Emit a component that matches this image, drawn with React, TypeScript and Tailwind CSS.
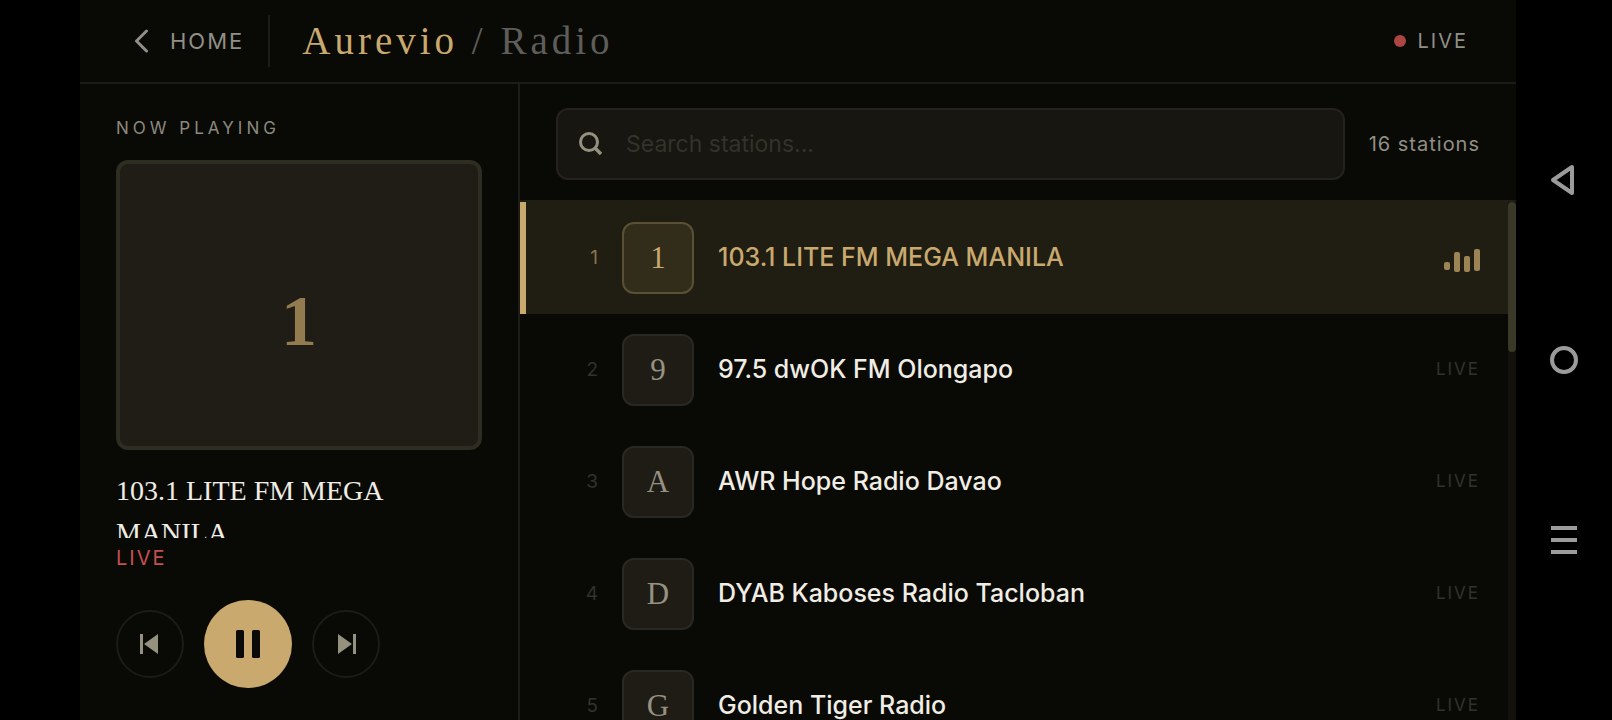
import React, { useState } from 'react';
import { clsx } from 'clsx';

interface Station {
  id: number;
  name: string;
}

const STATION_TOTAL = 16;

const stations: Station[] = [
  { id: 1, name: '103.1 LITE FM MEGA MANILA' },
  { id: 2, name: '97.5 dwOK FM Olongapo' },
  { id: 3, name: 'AWR Hope Radio Davao' },
  { id: 4, name: 'DYAB Kaboses Radio Tacloban' },
  { id: 5, name: 'Golden Tiger Radio' },
];

function Equalizer() {
  return (
    <svg viewBox="0 0 36 28" className="h-7 w-9 fill-[#9c8455]" aria-label="Playing">
      <rect x="0" y="18" width="6" height="8" rx="2" />
      <rect x="10" y="8" width="6" height="20" rx="2" />
      <rect x="20" y="12" width="6" height="16" rx="2" />
      <rect x="30" y="5" width="6" height="22" rx="2" />
    </svg>
  );
}

function Header() {
  return (
    <header className="flex h-[84px] shrink-0 items-center border-b-2 border-[#1c1c18] pr-12 pl-[54px]">
      <a href="#home" className="flex items-center gap-[22px] pr-6 text-[22px] tracking-[2px] text-[#918f86]">
        <svg viewBox="0 0 14 24" className="h-6 w-3.5" fill="none" stroke="currentColor" strokeWidth="3" strokeLinecap="round" strokeLinejoin="round">
          <path d="M12.5 2 2.5 12l10 10" />
        </svg>
        HOME
      </a>
      <span className="h-[52px] w-0.5 bg-[#1c1c18]" />
      <h1 className="pl-8 font-['Liberation_Serif',serif] text-[39px] tracking-[4px] whitespace-nowrap text-[#c9a96e]">
        Aurevio <span className="text-[#5e5d59]">/ Radio</span>
      </h1>
      <div className="ml-auto flex items-center gap-3 text-xl tracking-[2px] text-[#918f86]">
        <span className="size-3 rounded-full bg-[#ac4643]" />
        LIVE
      </div>
    </header>
  );
}

function NowPlaying({ station, onStep }: { station: Station; onStep: (step: number) => void }) {
  const [playing, setPlaying] = useState(true);

  return (
    <aside className="flex w-[440px] shrink-0 flex-col border-r-2 border-[#1c1c18] px-9 py-8">
      <h2 className="text-[17px] leading-6 tracking-[4px] text-[#8b897f]">NOW PLAYING</h2>

      {/* Cover */}
      <div className="mt-5 flex min-h-0 flex-1 items-center justify-center rounded-xl border-4 border-[#2e2d22] bg-[#201d16] pt-8">
        <span className="font-['Liberation_Serif',serif] text-7xl font-bold text-[#937b50]">{station.name[0]}</span>
      </div>

      <p className="mt-5 h-[68px] overflow-hidden font-['Liberation_Serif',serif] text-[28px] leading-[42px] text-[#f0ede4]">
        {station.name}
      </p>
      <p className="mt-1.5 text-xl leading-7 tracking-[2px] text-[#c4504f]">LIVE</p>

      {/* Controls */}
      <div className="mt-7 flex items-center gap-5">
        <button aria-label="Previous station" onClick={() => onStep(-1)} className="flex size-[68px] items-center justify-center rounded-full border-2 border-[#1b1b17]">
          <svg viewBox="0 0 24 24" className="size-6 fill-[#95917f]">
            <path d="M2 2h3v20H2zM20 2v20L6 12z" />
          </svg>
        </button>
        <button aria-label={playing ? 'Pause' : 'Play'} onClick={() => setPlaying(!playing)} className="flex size-[88px] items-center justify-center rounded-full bg-[#c9a96e]">
          <svg viewBox="0 0 28 28" className="size-7 fill-[#0a0a08]">
            {playing ? (
              <>
                <rect x="2" y="0" width="8" height="28" rx="1.5" />
                <rect x="18" y="0" width="8" height="28" rx="1.5" />
              </>
            ) : (
              <path d="M5 1v26l21-13z" />
            )}
          </svg>
        </button>
        <button aria-label="Next station" onClick={() => onStep(1)} className="flex size-[68px] items-center justify-center rounded-full border-2 border-[#1b1b17]">
          <svg viewBox="0 0 24 24" className="size-6 fill-[#95917f]">
            <path d="M19 2h3v20h-3zM4 2v20l14-10z" />
          </svg>
        </button>
      </div>
    </aside>
  );
}

function StationRow({ station, active, onSelect }: { station: Station; active: boolean; onSelect: () => void }) {
  return (
    <li>
      <button
        onClick={onSelect}
        className={clsx(
          'flex h-28 w-full items-center gap-6 border-l-[6px] pr-7 pl-9 text-left',
          active ? 'border-[#c9a96e] bg-[#201d13]' : 'border-transparent'
        )}
      >
        <span className={clsx('w-9 text-right text-[19px]', active ? 'text-[#8a7449]' : 'text-[#33322c]')}>
          {station.id}
        </span>
        <span
          className={clsx(
            "flex size-[72px] shrink-0 items-center justify-center rounded-xl border-2 font-['Liberation_Serif',serif] text-[31px]",
            active ? 'border-[#5a5033] bg-[#322d1b] text-[#c9a96e]' : 'border-[#2a2822] bg-[#1f1c16] text-[#979181]'
          )}
        >
          {station.name[0]}
        </span>
        <span className={clsx('min-w-0 flex-1 truncate text-[25px] font-medium', active ? 'text-[#c9a96e]' : 'text-[#f0ede4]')}>
          {station.name}
        </span>
        {active ? <Equalizer /> : <span className="text-[17px] tracking-[2px] text-[#33322c]">LIVE</span>}
      </button>
    </li>
  );
}

function SystemNav() {
  return (
    <nav className="flex w-24 shrink-0 flex-col items-center justify-center gap-[152px] bg-black text-[#9b9b9b]">
      <button aria-label="Back">
        <svg viewBox="0 0 28 28" className="size-7 overflow-visible" fill="none" stroke="currentColor" strokeWidth="4" strokeLinejoin="round">
          <path d="M22 1v26L3 14z" />
        </svg>
      </button>
      <button aria-label="Home">
        <svg viewBox="0 0 28 28" className="size-7" fill="none" stroke="currentColor" strokeWidth="4">
          <circle cx="14" cy="14" r="12" />
        </svg>
      </button>
      <button aria-label="Menu">
        <svg viewBox="0 0 28 28" className="size-7" fill="currentColor">
          <path d="M1 0h26v4H1zM1 12h26v4H1zM1 24h26v4H1z" />
        </svg>
      </button>
    </nav>
  );
}

export default function App() {
  const [current, setCurrent] = useState(0);
  const [query, setQuery] = useState('');

  const step = (n: number) => setCurrent((current + n + stations.length) % stations.length);
  const visible = stations.filter((s) => s.name.toLowerCase().includes(query.toLowerCase()));

  return (
    <div className="flex h-screen overflow-hidden bg-black pl-20 font-['Inter',sans-serif]">
      <div className="flex min-w-0 flex-1 flex-col bg-[#090906]">
        <Header />
        <div className="flex min-h-0 flex-1">
          <NowPlaying station={stations[current]} onStep={step} />

          <main className="flex min-w-0 flex-1 flex-col">
            <div className="flex items-center gap-6 border-b-2 border-[#1e1d16] px-9 pt-6 pb-5">
              <label className="flex h-[72px] flex-1 items-center gap-6 rounded-xl border-2 border-[#23221e] bg-[#171611] px-5">
                <svg viewBox="0 0 24 24" className="size-6" fill="none" stroke="#95917f" strokeWidth="3">
                  <circle cx="11" cy="10" r="8.5" />
                  <path d="m17 16 6 6" strokeWidth="3.5" />
                </svg>
                <input
                  type="text"
                  aria-label="Search stations"
                  placeholder="Search stations..."
                  value={query}
                  onChange={(e) => setQuery(e.target.value)}
                  className="min-w-0 flex-1 text-[23px] text-[#f0ede4] outline-none placeholder:text-[#33322b]"
                />
              </label>
              <span className="text-xl tracking-[1px] whitespace-nowrap text-[#918f86]">{STATION_TOTAL} stations</span>
            </div>

            <div className="flex min-h-0 flex-1 overflow-hidden">
              <ul className="min-w-0 flex-1">
                {visible.map((station) => (
                  <StationRow
                    key={station.id}
                    station={station}
                    active={station.id === stations[current].id}
                    onSelect={() => setCurrent(station.id - 1)}
                  />
                ))}
              </ul>
              {/* Scroll track */}
              <div className="w-2 bg-[#12110c]">
                <div className="h-[29%] rounded-full bg-[#3a3826]" />
              </div>
            </div>
          </main>
        </div>
      </div>
      <SystemNav />
    </div>
  );
}
